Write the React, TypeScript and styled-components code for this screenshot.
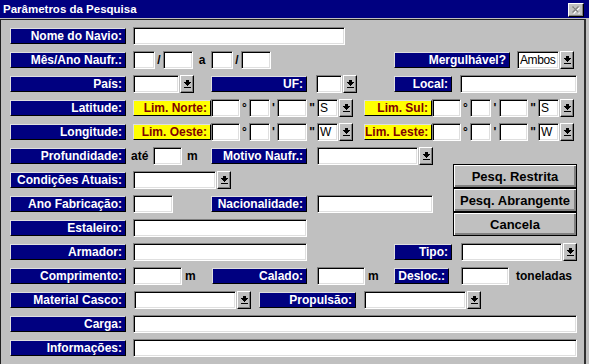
import React from "react";
import styled, { createGlobalStyle } from "styled-components";

const GlobalStyle = createGlobalStyle`
  html, body { margin: 0; padding: 0; background: #c0c0c0; }
  body { font-family: "Liberation Sans", Arial, sans-serif; font-size: 12px; }
  * { box-sizing: border-box; }
`;

const Window = styled.div`
  width: 589px;
  height: 364px;
  background: #c0c0c0;
  display: flex;
  flex-direction: column;
  overflow: hidden;
`;

const TitleBar = styled.div`
  height: 18px;
  flex-shrink: 0;
  background: #000080;
  color: #fff;
  font-weight: bold;
  font-size: 11.5px;
  display: flex;
  align-items: center;
  justify-content: space-between;
  padding: 0 5px 0 3px;
`;

const CloseButton = styled.div`
  width: 16px;
  height: 14px;
  margin-top: 1px;
  background: #c0c0c0;
  border: 1px solid;
  border-color: #fff #000 #000 #fff;
  box-shadow: inset -1px -1px #808080;
  display: flex;
  align-items: center;
  justify-content: center;
`;

const Panel = styled.div`
  flex: 1;
  margin-top: 1px;
  margin-right: 3px;
  border-top: 1px solid #202020;
  border-left: 1px solid #202020;
  border-right: 2px solid #303030;
  padding: 7px 0 0 9px;
  display: flex;
  flex-direction: column;
  gap: 6px;
`;

const Row = styled.div`
  display: flex;
  align-items: center;
  height: 18px;
  flex-shrink: 0;
`;

const Middle = styled.div`
  display: flex;
`;

const MiddleRows = styled.div`
  width: 443px;
  display: flex;
  flex-direction: column;
  gap: 6px;
`;

const ButtonStack = styled.div`
  display: flex;
  flex-direction: column;
  padding-top: 17px;
`;

const Label = styled.div<{ $w: number; $ml?: number; $tone?: "navy" | "yellow" }>`
  flex-shrink: 0;
  width: ${(p) => p.$w}px;
  margin-left: ${(p) => p.$ml ?? 0}px;
  height: 16px;
  background: ${(p) => (p.$tone === "yellow" ? "#ffff00" : "#000080")};
  color: ${(p) => (p.$tone === "yellow" ? "#800000" : "#ffffff")};
  font-weight: bold;
  font-size: 12px;
  line-height: 14px;
  text-align: right;
  padding-right: 3px;
  white-space: nowrap;
  overflow: hidden;
  border: 1px solid;
  border-color: #dfdfdf #000 #000 #dfdfdf;
`;

const TextBox = styled.div<{ $w: number; $ml?: number }>`
  flex-shrink: 0;
  width: ${(p) => p.$w}px;
  margin-left: ${(p) => p.$ml ?? 0}px;
  height: 18px;
  background: #fff;
  border: 1px solid;
  border-color: #808080 #fff #fff #808080;
  box-shadow: inset 1px 1px #000, inset -1px -1px #dfdfdf;
  font-size: 12px;
  line-height: 16px;
  padding-left: 2px;
  color: #000;
  letter-spacing: -0.4px;
  white-space: nowrap;
  overflow: hidden;
`;

const ComboWrap = styled.div<{ $ml?: number }>`
  display: flex;
  flex-shrink: 0;
  margin-left: ${(p) => p.$ml ?? 0}px;
`;

const DropButton = styled.div`
  width: 14px;
  height: 18px;
  margin-left: 1px;
  background: #c0c0c0;
  border: 1px solid;
  border-color: #fff #000 #000 #fff;
  box-shadow: inset -1px -1px #808080;
  display: flex;
  align-items: center;
  justify-content: center;
`;

const Unit = styled.div<{ $w?: number; $ml?: number }>`
  flex-shrink: 0;
  ${(p) => (p.$w ? `width: ${p.$w}px;` : "")}
  margin-left: ${(p) => p.$ml ?? 0}px;
  font-weight: bold;
  font-size: 12px;
  color: #000;
  white-space: nowrap;
`;

const Sep = styled.div<{ $w: number }>`
  flex-shrink: 0;
  width: ${(p) => p.$w}px;
  text-align: center;
  font-weight: bold;
  font-size: 12px;
  line-height: 18px;
  height: 18px;
  color: #000;
`;

const ActionButton = styled.button`
  width: 124px;
  height: 24px;
  padding: 0;
  background: #c0c0c0;
  border: 1px solid #000;
  box-shadow: inset 1px 1px #fff, inset -1px -1px #808080, inset -2px -2px #808080;
  font-family: "Liberation Sans", Arial, sans-serif;
  font-weight: bold;
  font-size: 13px;
  color: #000;
`;

const DropArrow = () => (
  <svg width="7" height="8" viewBox="0 0 7 8" shapeRendering="crispEdges">
    <rect x="2" y="0" width="3" height="2" fill="#000" />
    <rect x="0" y="2" width="7" height="1" fill="#000" />
    <rect x="1" y="3" width="5" height="1" fill="#000" />
    <rect x="2" y="4" width="3" height="1" fill="#000" />
    <rect x="3" y="5" width="1" height="1" fill="#000" />
    <rect x="0" y="7" width="7" height="1" fill="#000" />
  </svg>
);

const CloseGlyph = () => (
  <svg width="9" height="8" viewBox="0 0 9 8">
    <path d="M1.5 1.5 L7.5 7.5 M7.5 1.5 L1.5 7.5" stroke="#fff" strokeWidth="1.4" />
    <path d="M0.5 0.5 L6.5 6.5 M6.5 0.5 L0.5 6.5" stroke="#808080" strokeWidth="1.4" />
  </svg>
);

const Combo = ({ w, ml, value }: { w: number; ml?: number; value?: string }) => (
  <ComboWrap $ml={ml}>
    <TextBox $w={w}>{value}</TextBox>
    <DropButton>
      <DropArrow />
    </DropButton>
  </ComboWrap>
);

const Coord = ({ dir }: { dir: string }) => (
  <>
    <TextBox $w={29} />
    <Sep $w={9}>°</Sep>
    <TextBox $w={21} />
    <Sep $w={7}>'</Sep>
    <TextBox $w={30} />
    <Sep $w={10}>"</Sep>
    <Combo w={21} value={dir} />
  </>
);

const Coord2 = ({ dir }: { dir: string }) => (
  <>
    <TextBox $w={29} />
    <Sep $w={9}>°</Sep>
    <TextBox $w={21} />
    <Sep $w={8}>'</Sep>
    <TextBox $w={29} />
    <Sep $w={10}>"</Sep>
    <Combo w={21} value={dir} />
  </>
);

export default function App() {
  return (
    <>
      <GlobalStyle />
      <Window>
        <TitleBar>
          <span>Parâmetros da Pesquisa</span>
          <CloseButton>
            <CloseGlyph />
          </CloseButton>
        </TitleBar>
        <Panel>
          <Row>
            <Label $w={116}>Nome do Navio:</Label>
            <TextBox $ml={7} $w={212} />
          </Row>
          <Row>
            <Label $w={116}>Mês/Ano Naufr.:</Label>
            <TextBox $ml={7} $w={22} />
            <Sep $w={8}>/</Sep>
            <TextBox $w={30} />
            <Sep $w={18}>a</Sep>
            <TextBox $w={22} />
            <Sep $w={8}>/</Sep>
            <TextBox $w={30} />
            <Label $ml={123} $w={116}>Mergulhável?</Label>
            <Combo ml={7} w={42} value="Ambos" />
          </Row>
          <Row>
            <Label $w={116}>País:</Label>
            <Combo ml={7} w={46} />
            <Label $ml={17} $w={96}>UF:</Label>
            <Combo ml={9} w={26} />
            <Label $ml={37} $w={58}>Local:</Label>
            <TextBox $ml={8} $w={117} />
          </Row>
          <Row>
            <Label $w={116}>Latitude:</Label>
            <Label $ml={7} $w={78} $tone="yellow">Lim. Norte:</Label>
            <Coord dir="S" />
            <Label $ml={11} $w={68} $tone="yellow">Lim. Sul:</Label>
            <Coord2 dir="S" />
          </Row>
          <Row>
            <Label $w={116}>Longitude:</Label>
            <Label $ml={7} $w={78} $tone="yellow">Lim. Oeste:</Label>
            <Coord dir="W" />
            <Label $ml={11} $w={68} $tone="yellow">Lim. Leste:</Label>
            <Coord2 dir="W" />
          </Row>
          <Middle>
            <MiddleRows>
              <Row>
                <Label $w={116}>Profundidade:</Label>
                <Unit $ml={5} $w={22}>até</Unit>
                <TextBox $w={29} />
                <Unit $ml={5} $w={24}>m</Unit>
                <Label $w={96}>Motivo Naufr.:</Label>
                <Combo ml={10} w={101} />
              </Row>
              <Row>
                <Label $w={116}>Condições Atuais:</Label>
                <Combo ml={7} w={83} />
              </Row>
              <Row>
                <Label $w={116}>Ano Fabricação:</Label>
                <TextBox $ml={7} $w={40} />
                <Label $ml={38} $w={96}>Nacionalidade:</Label>
                <TextBox $ml={10} $w={116} />
              </Row>
              <Row>
                <Label $w={116}>Estaleiro:</Label>
                <TextBox $ml={7} $w={174} />
              </Row>
            </MiddleRows>
            <ButtonStack>
              <ActionButton>Pesq. Restrita</ActionButton>
              <ActionButton>Pesq. Abrangente</ActionButton>
              <ActionButton>Cancela</ActionButton>
            </ButtonStack>
          </Middle>
          <Row>
            <Label $w={116}>Armador:</Label>
            <TextBox $ml={7} $w={174} />
            <Label $ml={87} $w={58}>Tipo:</Label>
            <Combo ml={9} w={101} />
          </Row>
          <Row>
            <Label $w={116}>Comprimento:</Label>
            <TextBox $ml={7} $w={49} />
            <Unit $ml={3} $w={27}>m</Unit>
            <Label $w={95}>Calado:</Label>
            <TextBox $ml={10} $w={48} />
            <Unit $ml={3} $w={26}>m</Unit>
            <Label $w={55}>Desloc.:</Label>
            <TextBox $ml={12} $w={48} />
            <Unit $ml={7}>toneladas</Unit>
          </Row>
          <Row>
            <Label $w={116}>Material Casco:</Label>
            <Combo ml={8} w={102} />
            <Label $ml={8} $w={97}>Propulsão:</Label>
            <Combo ml={8} w={102} />
          </Row>
          <Row>
            <Label $w={116}>Carga:</Label>
            <TextBox $ml={7} $w={444} />
          </Row>
          <Row>
            <Label $w={116}>Informações:</Label>
            <TextBox $ml={7} $w={444} />
          </Row>
        </Panel>
      </Window>
    </>
  );
}
